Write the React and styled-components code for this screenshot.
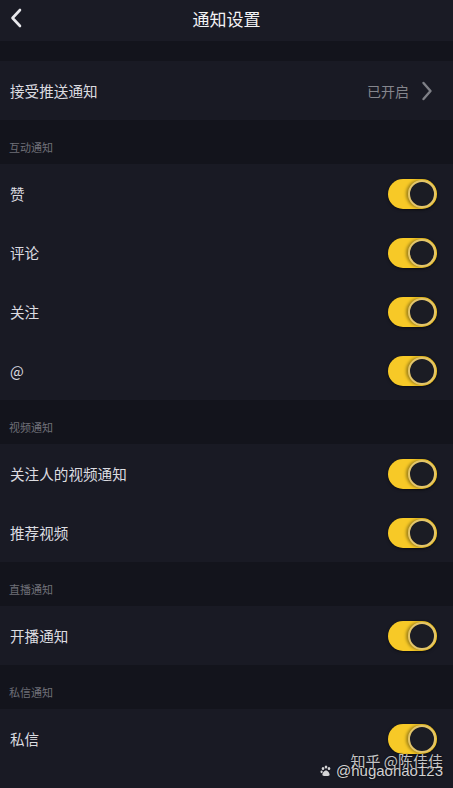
import React from "react";
import styled, { createGlobalStyle } from "styled-components";

const GlobalStyle = createGlobalStyle`
  html, body {
    margin: 0;
    padding: 0;
    background: #191a24;
    font-family: "Noto Sans CJK SC", "Noto Sans", sans-serif;
  }
`;

const Page = styled.div`
  position: relative;
  width: 453px;
  height: 788px;
  overflow: hidden;
  background: #191a24;
`;

const Header = styled.header`
  height: 41px;
  display: flex;
  align-items: center;
  justify-content: center;
  position: relative;
  box-sizing: border-box;
  padding-bottom: 4px;
  background: #1a1b25;
  color: #f2f2f4;
  font-size: 17px;
`;

const Back = styled.div`
  position: absolute;
  left: 9px;
  top: 8px;
  display: flex;
`;

const Spacer = styled.div`
  height: 20px;
  background: #13141c;
`;

const Group = styled.section`
  background: #191a24;
`;

const SectionTitle = styled.div`
  height: 44px;
  display: flex;
  align-items: flex-end;
  padding: 0 9px 9px;
  box-sizing: border-box;
  background: #13141c;
  font-size: 11px;
  color: #6f7078;
`;

const Row = styled.div`
  height: 59px;
  display: flex;
  align-items: center;
  justify-content: space-between;
  padding: 0 16px 0 10px;
  color: #dcdce0;
  font-size: 14.6px;
`;

const Value = styled.div`
  display: flex;
  align-items: center;
  gap: 12px;
  color: #85868d;
  font-size: 14px;
  margin-right: 4px;
`;

const Toggle = styled.div`
  width: 49px;
  height: 30px;
  border-radius: 15px;
  background: ${({ $on }) => ($on ? "#f7c927" : "#3a3b44")};
  position: relative;
  box-shadow: 0 1px 3px rgba(0, 0, 0, 0.5);

  &::after {
    content: "";
    position: absolute;
    top: 1px;
    ${({ $on }) => ($on ? "right: 1px;" : "left: 1px;")}
    width: 24px;
    height: 24px;
    border-radius: 50%;
    background: #1b1c24;
    border: 2px solid #e3c56a;
    box-shadow: -2px 0 3px rgba(0, 0, 0, 0.35);
  }
`;

const Watermark = styled.div`
  position: absolute;
  right: 10px;
  bottom: 9px;
  display: flex;
  align-items: center;
  gap: 4px;
  color: rgba(255, 255, 255, 0.82);
  font-family: "Liberation Sans", "Noto Sans CJK SC", sans-serif;
  font-size: 15px;
  text-shadow: 0 0 2px rgba(0, 0, 0, 0.8);
`;

const WatermarkTop = styled.span`
  position: absolute;
  right: 0;
  bottom: 8px;
  font-family: "Noto Sans CJK SC", sans-serif;
  font-size: 15px;
  color: rgba(255, 255, 255, 0.75);
  white-space: nowrap;
`;

const sections = [
  { title: "互动通知", items: ["赞", "评论", "关注", "@"] },
  { title: "视频通知", items: ["关注人的视频通知", "推荐视频"] },
  { title: "直播通知", items: ["开播通知"] },
  { title: "私信通知", items: ["私信"] },
];

const Paw = () => (
  <svg width="12" height="12" viewBox="0 0 12 12" fill="currentColor">
    <ellipse cx="3" cy="3.5" rx="1.3" ry="1.6" />
    <ellipse cx="6" cy="2" rx="1.3" ry="1.6" />
    <ellipse cx="9" cy="3.5" rx="1.3" ry="1.6" />
    <ellipse cx="1.6" cy="6.8" rx="1.1" ry="1.4" />
    <path d="M6 5.5c2 0 3.6 2.8 3.6 4.2 0 1.4-1.8 1.3-3.6 1.3S2.4 11.1 2.4 9.7C2.4 8.3 4 5.5 6 5.5z" />
  </svg>
);

export default function App() {
  return (
    <>
      <GlobalStyle />
      <Page>
        <Header>
          <Back>
            <svg width="14" height="20" viewBox="0 0 14 20">
              <path d="M11 2 L3.5 10 L11 18" fill="none" stroke="#e8e8ec" strokeWidth="2.6" strokeLinecap="round" strokeLinejoin="round" />
            </svg>
          </Back>
          通知设置
        </Header>
        <Spacer />
        <Group>
          <Row>
            <span>接受推送通知</span>
            <Value>
              已开启
              <svg width="12" height="20" viewBox="0 0 12 20">
                <path d="M2.5 2 L9.5 10 L2.5 18" fill="none" stroke="#7f8087" strokeWidth="2.4" strokeLinecap="round" strokeLinejoin="round" />
              </svg>
            </Value>
          </Row>
        </Group>
        {sections.map((s) => (
          <div key={s.title}>
            <SectionTitle>{s.title}</SectionTitle>
            <Group>
              {s.items.map((item) => (
                <Row key={item}>
                  <span>{item}</span>
                  <Toggle $on />
                </Row>
              ))}
            </Group>
          </div>
        ))}
        <Watermark>
          <Paw />
          <span>@hugaohao123</span>
          <WatermarkTop>知乎 @陈佳佳</WatermarkTop>
        </Watermark>
      </Page>
    </>
  );
}
